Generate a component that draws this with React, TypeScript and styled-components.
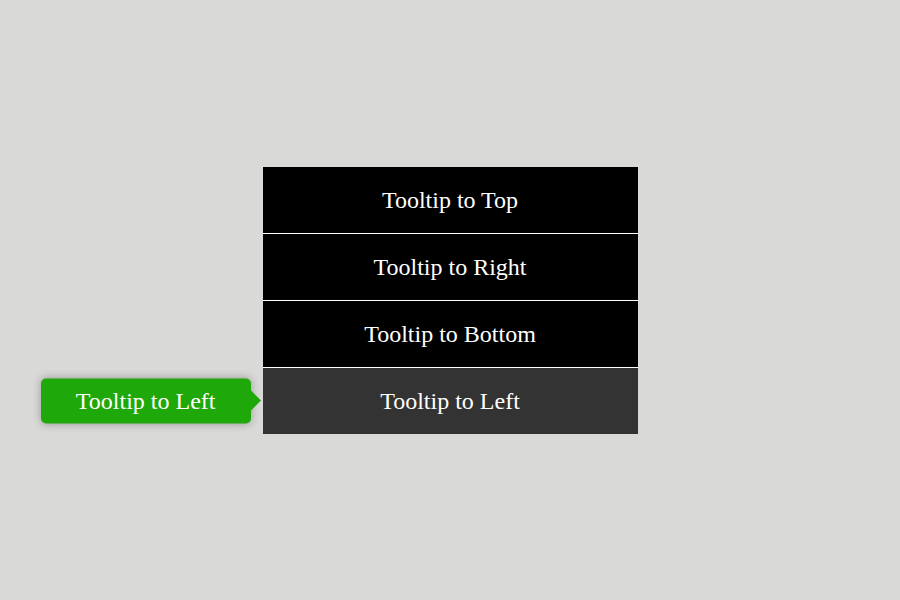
import React from "react";
import styled, { createGlobalStyle } from "styled-components";

const Global = createGlobalStyle`
  html, body { margin: 0; padding: 0; }
  body {
    background: #d9d9d8;
    font-family: "Liberation Serif", "Times New Roman", serif;
  }
`;

const Page = styled.div`
  width: 900px;
  height: 600px;
  display: flex;
  align-items: center;
  justify-content: center;
`;

const List = styled.ul`
  list-style: none;
  margin: 0;
  padding: 0;
  width: 375px;
  display: flex;
  flex-direction: column;
`;

const Item = styled.li<{ $active?: boolean }>`
  position: relative;
  box-sizing: border-box;
  height: 66px;
  padding-top: 2px;
  display: flex;
  align-items: center;
  justify-content: center;
  background: ${(p) => (p.$active ? "#333333" : "#000000")};
  color: #ffffff;
  font-size: 24px;
  & + & {
    height: 67px;
    border-top: 1px solid #ffffff;
  }
`;

const Tooltip = styled.span`
  position: absolute;
  right: calc(100% + 12px);
  top: 50%;
  transform: translateY(-50%);
  box-sizing: border-box;
  height: 45px;
  padding: 1px 35px 0;
  display: flex;
  align-items: center;
  white-space: nowrap;
  background: #1fa80a;
  color: #ffffff;
  border-radius: 5px;
  box-shadow: 0 0 8px rgba(0, 0, 0, 0.3);
  font-size: 24px;
  &::after {
    content: "";
    position: absolute;
    left: 100%;
    top: 50%;
    margin-top: -10px;
    border-style: solid;
    border-width: 10px 0 10px 10px;
    border-color: transparent transparent transparent #1fa80a;
  }
`;

const items = [
  { label: "Tooltip to Top" },
  { label: "Tooltip to Right" },
  { label: "Tooltip to Bottom" },
  { label: "Tooltip to Left", tip: "Tooltip to Left" },
];

export default function App() {
  return (
    <>
      <Global />
      <Page>
        <List>
          {items.map((it) => (
            <Item key={it.label} $active={!!it.tip}>
              {it.label}
              {it.tip && <Tooltip>{it.tip}</Tooltip>}
            </Item>
          ))}
        </List>
      </Page>
    </>
  );
}
